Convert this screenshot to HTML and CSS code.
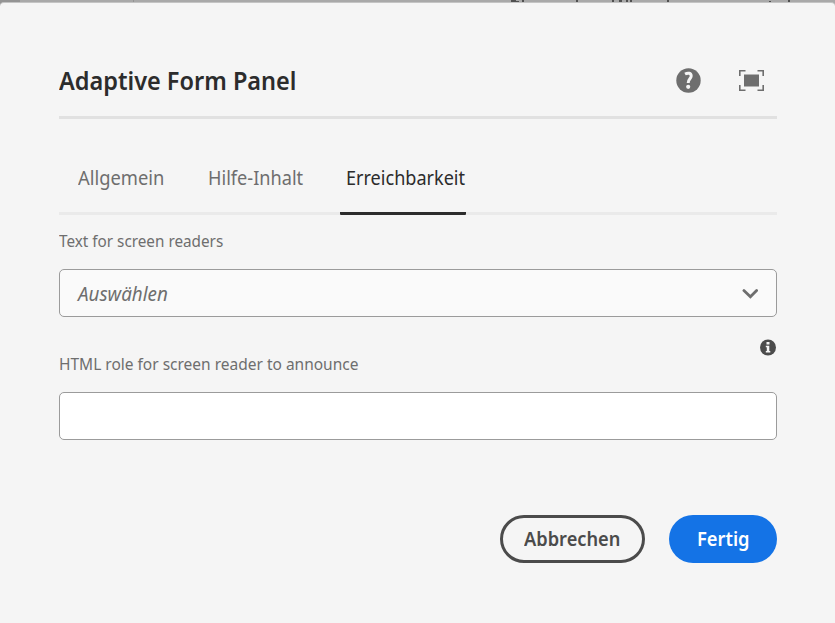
FILE: index.html
```
<!DOCTYPE html>
<html lang="de">
<head>
<meta charset="utf-8">
<title>Adaptive Form Panel</title>
<link rel="stylesheet" href="styles.css">
</head>
<body>
<svg class="backdrop" width="835" height="8" viewBox="0 0 835 8" aria-hidden="true">
  <path fill="#a9a9a9" d="M0 0h835v8H0z"/>
  <path fill="#949494" d="M0 0h20v8H0zM133 0h1v8h-1z"/>
  <path fill="#505050" d="M511 0h5v2h-5zM516 1h3v1h-3zM522 0h2v2h-2zM576 0h2v2h-2zM612 0h2v2h-2zM619 0h3v2h-3zM626 0h2v2h-2zM630 0h2v2h-2zM667 0h2v2h-2zM769 1h2v1h-2zM788 0h2v2h-2z"/>
</svg>
<main class="dialog">
  <header class="header">
    <h1 class="title"><span class="fit">Adaptive Form Panel</span></h1>
    <div class="tools">
      <svg width="25" height="25" viewBox="0 0 25 25"><circle cx="12.5" cy="12.5" r="12.2" fill="#6e6e6e"/><path d="M9 6C12 4.500 15.200 5 15.200 8C15.200 10.800 12.200 11 12.200 15" fill="none" stroke="#f5f5f5" stroke-width="3"/><circle cx="12.2" cy="18.800" r="2.100" fill="#f5f5f5"/></svg>
      <svg width="25" height="21" viewBox="0 0 25 21"><path fill="#6e6e6e" d="M5 4.500h15v12H5z"/><path d="M.8 6V.8H6.500M18.500.8h5.700V6M24.200 15v5.200h-5.700M6.500 20.200H.8V15" fill="none" stroke="#6e6e6e" stroke-width="1.6"/></svg>
    </div>
  </header>
  <nav class="tabs">
    <a class="tab general"><span class="fit">Allgemein</span></a>
    <a class="tab help"><span class="fit">Hilfe-Inhalt</span></a>
    <a class="tab access active"><span class="fit">Erreichbarkeit</span></a>
  </nav>
  <label class="label reader"><span class="fit">Text for screen readers</span></label>
  <div class="field select">
    <span class="fit">Auswählen</span>
    <svg width="16" height="10" viewBox="0 0 16 10"><path d="M1.900 1.600 8.400 7.800l6.200-6.200" fill="none" stroke="#6e6e6e" stroke-width="2.800" stroke-linecap="round"/></svg>
  </div>
  <div class="info">
    <svg width="16" height="17" viewBox="0 -.5 16 17"><circle cx="8" cy="8" r="8" fill="#4b4b4b"/><path fill="#f5f5f5" d="M6.500 2.500h3v2.600h-3zM5.800 6.300h3.500v5.200h1v1.500H5.800v-1.500h1V7.800h-1z"/></svg>
  </div>
  <label class="label role"><span class="fit">HTML role for screen reader to announce</span></label>
  <div class="field input"></div>
  <footer class="actions">
    <button class="button cancel"><span class="fit">Abbrechen</span></button>
    <button class="button done"><span class="fit">Fertig</span></button>
  </footer>
</main>
</body>
</html>
```
FILE: styles.css
```
* { box-sizing: border-box; }
body { margin: 0; height: 623px; overflow: hidden; font-family: "Noto Sans", sans-serif; color: #6e6e6e; background: #f5f5f5; }
.backdrop { display: block; margin-bottom: -6px; }
.dialog { position: relative; height: 621px; padding: 42px 58px 0 59px; background: #f5f5f5; border-top: 1px solid #c4c4c4; border-radius: 4px 4px 0 0; }
.fit { display: inline-block; white-space: nowrap; transform-origin: 0 50%; }
.header { display: flex; justify-content: space-between; height: 74px; border-bottom: 3px solid #e1e1e1; }
.title { margin: 17px 0 0; font-size: 25px; line-height: 36px; font-weight: 600; color: #2c2c2c; }
.title .fit { transform: scaleX(.94); }
.tools { display: flex; align-items: center; gap: 38px; height: 71px; padding-right: 13px; }
.tabs { display: flex; height: 96px; border-bottom: 3px solid #eaeaea; }
.tab { height: 96px; padding: 42px 0 0; font-size: 19px; line-height: 34px; }
.general { width: 130px; padding-left: 19px; margin-right: 19px; }
.general .fit { transform: scaleX(.966); }
.help { width: 131.5px; }
.help .fit { transform: scaleX(.955); }
.access { width: 126px; padding-left: 6.5px; }
.access .fit { transform: scaleX(.951); }
.active { color: #2c2c2c; border-bottom: 3px solid #2c2c2c; border-radius: 1px; }
.label { display: block; height: 24px; font-size: 16.5px; line-height: 24px; }
.reader { margin-top: 14px; }
.reader .fit { transform: scaleX(.926); }
.role .fit { transform: scaleX(.939); }
.field { height: 48px; border: 1px solid #9b9b9b; border-radius: 5px; background: #fff; }
.select { display: flex; align-items: center; justify-content: space-between; margin-top: 16px; padding: 1px 18px 0; background: #fafafa; font-size: 19px; font-style: italic; }
.select .fit { padding-top: 1px; transform: scaleX(.99); }
.info { display: flex; justify-content: flex-end; height: 35px; padding: 22px 1px 0 0; }
.input { margin-top: 16px; }
.actions { display: flex; justify-content: flex-end; gap: 24px; margin-top: 75px; }
.button { height: 48px; padding: 0; border: 0; border-radius: 24px; font: 600 19px/40px "Noto Sans", sans-serif; text-align: left; }
.cancel { width: 145px; padding-left: 21px; border: 3px solid #4b4b4b; background: transparent; color: #4b4b4b; }
.cancel .fit { transform: scaleX(.96); }
.done { width: 108px; padding-left: 28px; background: #1473e6; color: #fff; }
.done .fit { transform: scaleX(.963); }
```
